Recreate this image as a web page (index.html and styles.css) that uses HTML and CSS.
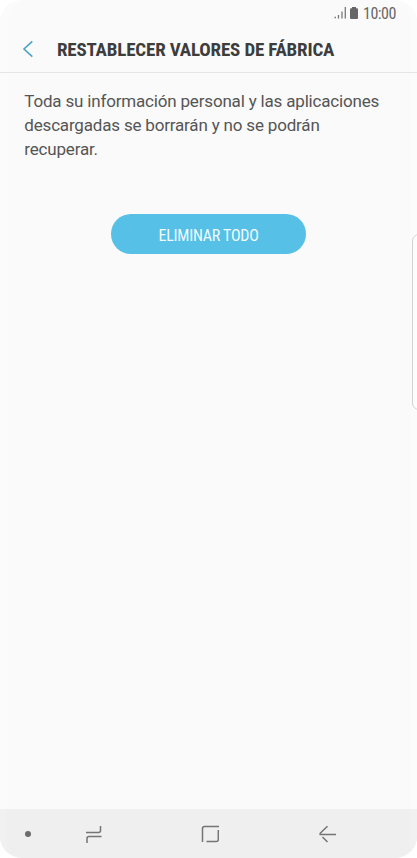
FILE: index.html
```html
<!DOCTYPE html>
<html lang="es">
<head>
<meta charset="utf-8">
<title>Restablecer valores de fábrica</title>
<link rel="stylesheet" href="styles.css">
</head>
<body>
<div class="screen">
  <div class="status">
    <svg class="signal" width="13" height="12" viewBox="0 0 13 12"><path d="M.5 10.500h1.500M4.500 8v3.500M8 4.500v7M11.300 0v11.500"/></svg>
    <svg class="battery" width="8" height="12" viewBox="0 0 8 12"><path d="M2 0h4v1.200H7q1 0 1 1V11q0 1-1 1H1q-1 0-1-1V2.200q0-1 1-1h1z"/></svg>
    <span class="time">10:00</span>
  </div>
  <header class="header">
    <svg class="back" width="12" height="18" viewBox="0 0 12 18"><path d="M10.300 1.300 2 9l8.300 7.700"/></svg>
    <h1 class="title">RESTABLECER VALORES DE FÁBRICA</h1>
  </header>
  <main class="content">
    <p class="message">Toda su información personal y las aplicaciones<br>descargadas se borrarán y no se podrán<br>recuperar.</p>
    <button class="delete"><span class="label">ELIMINAR TODO</span></button>
  </main>
  <nav class="nav">
    <span class="dot"></span>
    <svg class="recents" width="18" height="20" viewBox="0 0 18 20"><path d="M1 8.500h12.500q2 0 2-2V2M16.500 12.500H4q-2 0-2 2v4.500"/></svg>
    <svg class="home" width="18" height="18" viewBox="0 0 18 18"><path d="M1.500 17V3.500Q1.500 1.500 3.500 1.500H18M17.300 5v9.500q0 2-2 2H5.500"/></svg>
    <svg class="return" width="18" height="18" viewBox="0 0 18 18"><path d="M8.500 1.200 1.200 8.300v1.200H17M3.500 12l5 5"/></svg>
  </nav>
  <div class="edge"></div>
</div>
</body>
</html>
```
FILE: styles.css
```css
body { margin: 0; background: #fff; font-family: Roboto, sans-serif; }
.screen {
  position: relative;
  box-sizing: border-box;
  width: 417px;
  height: 858px;
  display: flex;
  flex-direction: column;
  overflow: hidden;
  background: #fafafa;
  border-radius: 22px;
  box-shadow: inset 7px 0 #fbfbfb, inset -7px 0 #fbfbfb;
}
.status { display: flex; align-items: center; height: 26px; padding-left: 334px; }
.battery { margin-left: 3px; margin-top: -1px; fill: #666; }
.signal { fill: none; stroke: #777; stroke-width: 1.3; }
.time { margin-left: 5px; padding-top: 2px; font-size: 16px; font-stretch: 75%; line-height: 24px; letter-spacing: -.5px; color: #666; white-space: nowrap; }
.header { box-sizing: border-box; display: flex; align-items: center; height: 47px; padding-left: 22px; border-bottom: 1px solid #e5e5e5; }
.back { fill: none; stroke: #4ba3c7; stroke-width: 1.6; }
.title { margin: 0 0 0 23px; padding-top: 2px; font-size: 19px; font-stretch: 75%; font-weight: 700; line-height: 24px; letter-spacing: -.17px; color: #3d3d3d; white-space: nowrap; }
.content { flex: 1; padding-top: 16px; }
.message { margin: 0 0 0 24.3px; font-size: 17px; line-height: 24px; letter-spacing: -.18px; color: #555; white-space: nowrap; }
.delete { display: block; width: 195px; height: 40px; margin: 53px 0 0 111px; padding: 2px 0 0; border: 0; border-radius: 20px; background: #56c0e6; color: #f4fbfe; font: 400 16px Roboto, sans-serif; font-stretch: 75%; }
.label { display: inline-block; letter-spacing: -.25px; white-space: nowrap; }
.nav { display: flex; align-items: center; height: 49px; background: #efefef; box-shadow: inset 7px 0 #f1f1f1, inset -7px 0 #f1f1f1; }
.nav svg { fill: none; stroke: #747474; stroke-width: 1.5; }
.dot { width: 6px; height: 6px; margin-left: 25px; border-radius: 50%; background: #6c6c6c; }
.recents { margin-left: 54px; }
.home { margin-left: 98px; }
.return { margin-left: 100px; }
.edge { position: absolute; top: 234px; left: 412px; box-sizing: border-box; width: 16px; height: 176px; border: 1px solid #d2d2d2; border-radius: 7px; background: #fdfdfd; }
```
